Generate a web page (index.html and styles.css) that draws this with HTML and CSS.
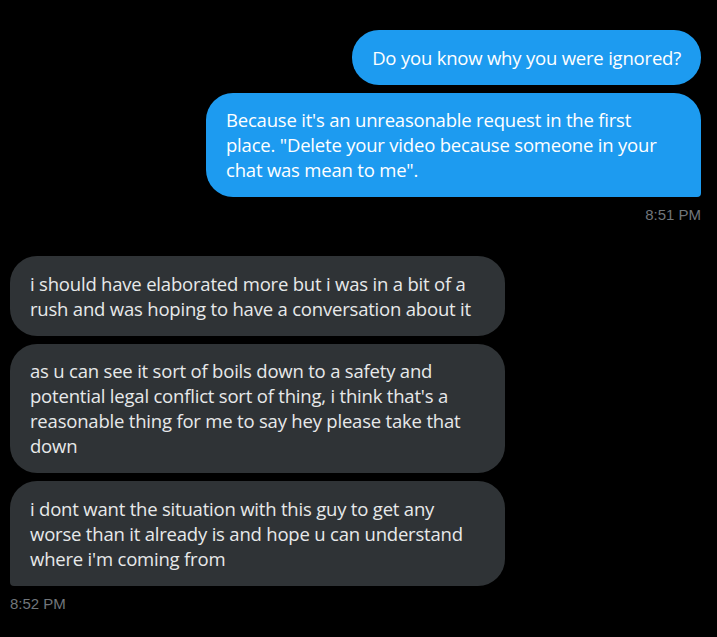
FILE: index.html
```html
<!DOCTYPE html>
<html lang="en">
<head>
  <meta charset="UTF-8">
  <meta name="viewport" content="width=device-width, initial-scale=1.0">
  <title>Messages</title>
  <link rel="stylesheet" href="styles.css">
</head>
<body>
<div class="chat">
  <div class="group sent">
    <div class="bubble">Do you know why you were ignored?</div>
    <div class="bubble last">Because it's an unreasonable request in the first place. "Delete your video because someone in your chat was mean to me".</div>
    <div class="time">8:51 PM</div>
  </div>

  <div class="group received">
    <div class="bubble">i should have elaborated more but i was in a bit of a rush and was hoping to have a conversation about it</div>
    <div class="bubble">as u can see it sort of boils down to a safety and potential legal conflict sort of thing, i think that's a reasonable thing for me to say hey please take that down</div>
    <div class="bubble last">i dont want the situation with this guy to get any worse than it already is and hope u can understand where i'm coming from</div>
    <div class="time">8:52 PM</div>
  </div>
</div>
</body>
</html>
```

FILE: styles.css
```css
html, body {
  margin: 0;
  background: #000;
}
body {
  font-family: 'Open Sans', 'Noto Sans', sans-serif;
  color: #fff;
}
.chat {
  padding: 30px 16px 0 10px;
  display: flex;
  flex-direction: column;
  gap: 33px;
}
.group {
  display: flex;
  flex-direction: column;
  gap: 8px;
}
.sent {
  align-items: flex-end;
}
.received {
  align-items: flex-start;
}
.bubble {
  max-width: 455px;
  padding: 14.5px 20px 15px;
  border-radius: 27px;
  font-size: 18.5px;
  line-height: 25px;
  letter-spacing: -0.2px;
}
.sent .bubble {
  background: #1d9bf0;
}
.sent .bubble.last {
  border-bottom-right-radius: 4px;
}
.received .bubble {
  background: #2f3336;
  color: #e7e9ea;
}
.received .bubble.last {
  border-bottom-left-radius: 4px;
}
.time {
  font-family: 'Liberation Sans', Arial, sans-serif;
  font-size: 15px;
  color: #71767b;
  margin-top: 1px;
}
```
